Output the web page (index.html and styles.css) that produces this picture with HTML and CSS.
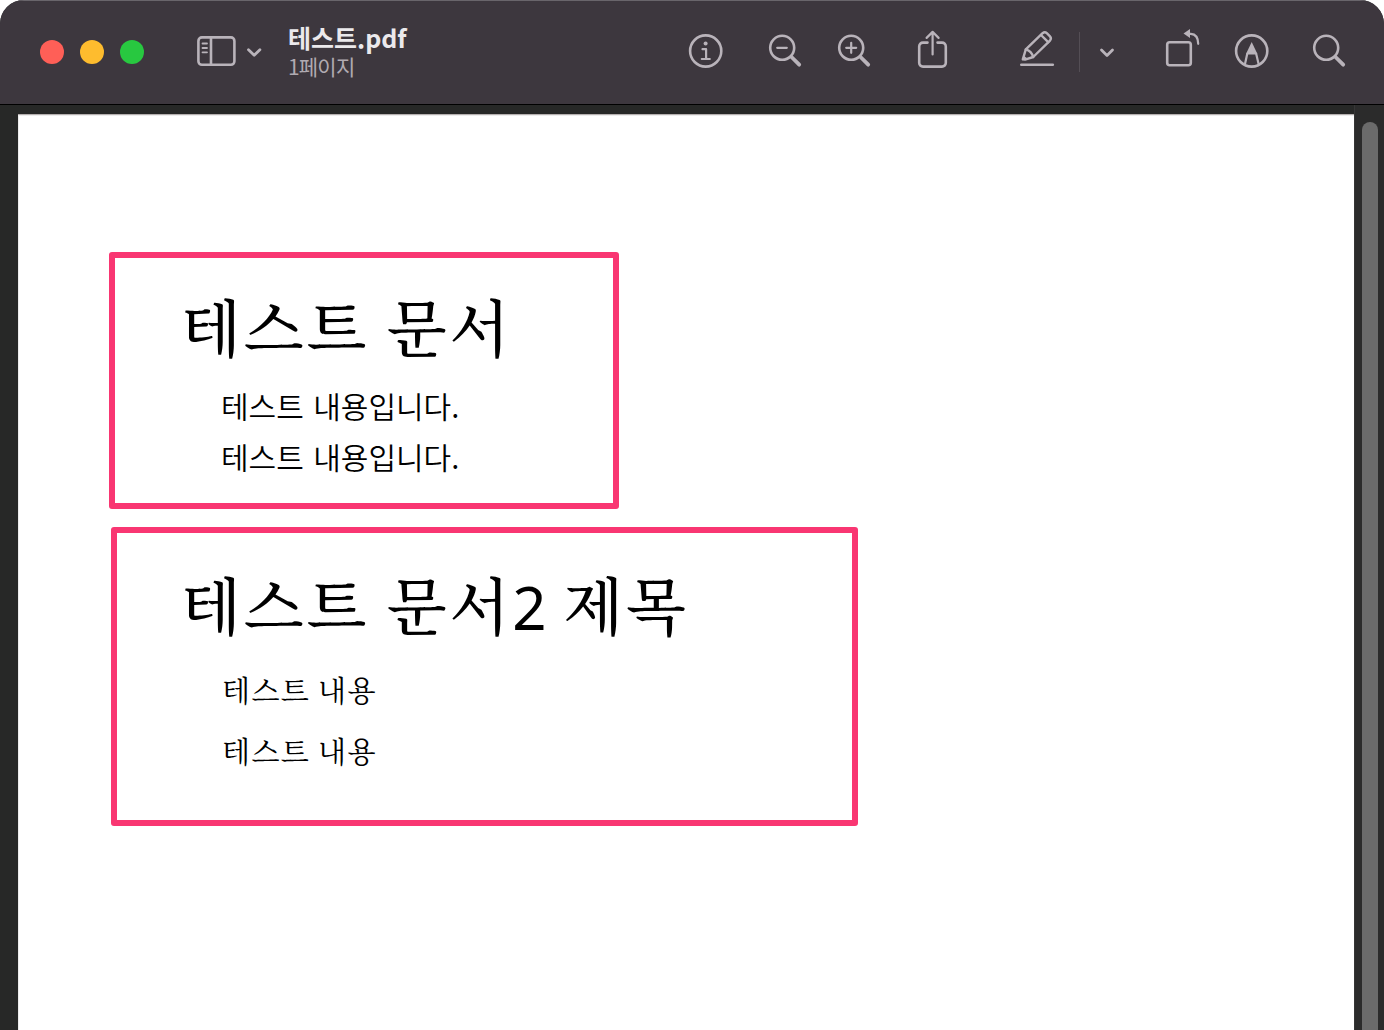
FILE: index.html
```html
<!DOCTYPE html>
<html lang="ko">
<head>
    <meta charset="UTF-8">
    <title>테스트.pdf</title>
    <link rel="stylesheet" href="styles.css">
</head>
<body>
<div class="window">
    <header class="toolbar">
        <div class="lights">
            <span class="light close"></span>
            <span class="light minimize"></span>
            <span class="light zoom"></span>
        </div>
        <svg class="icon sidebar" width="42" height="48" viewBox="0 0 42 48">
            <rect x="2.4" y="9.4" width="36" height="27.4" rx="3.5"/>
            <path d="M15 9.5v27"/>
            <path class="thin" d="M6.5 15.5h4.5M6.5 20h4.5M6.5 24.3h4.5"/>
        </svg>
        <svg class="icon chevron" width="20" height="48" viewBox="0 0 20 48">
            <path d="M4.5 21.7l5.7 5.5 5.7-5.5"/>
        </svg>
        <div class="title">
            <h1>테스트.pdf</h1>
            <span>1페이지</span>
        </div>
        <div class="tools">
            <svg class="icon" width="40" height="48" viewBox="0 0 40 48">
                <circle cx="19.7" cy="23" r="15.6"/>
                <circle class="solid" cx="19.6" cy="15.4" r="2"/>
                <path class="mid" d="M16.5 21.2h3.6v9.7M15.8 31h8"/>
            </svg>
            <svg class="icon zoom-out" width="40" height="48" viewBox="0 0 40 48">
                <circle cx="16.2" cy="19.8" r="12"/>
                <path class="mid" d="M11.2 19.8h9.6"/>
                <path class="handle" d="M25.5 29l7.7 7.7"/>
            </svg>
            <svg class="icon zoom-in" width="40" height="48" viewBox="0 0 40 48">
                <circle cx="16.2" cy="19.8" r="12"/>
                <path class="mid" d="M11.2 19.8h10M16.2 14.8v10"/>
                <path class="handle" d="M25.5 29l7.7 7.7"/>
            </svg>
            <svg class="icon share" width="40" height="48" viewBox="0 0 40 48">
                <path d="M15.5 14.6H11a3.8 3.8 0 0 0-3.8 3.8v16.4a3.8 3.8 0 0 0 3.8 3.8h19a3.8 3.8 0 0 0 3.8-3.8V18.4a3.8 3.8 0 0 0-3.8-3.8h-4.5"/>
                <path class="mid" d="M20.6 26.5v-22M14.6 9.9l6-6 6 6"/>
            </svg>
            <svg class="icon pencil" width="40" height="48" viewBox="0 0 40 48">
                <path d="M4.3 36.7h31.5"/>
                <path class="body" d="M8.8 21.4L25.6 5.2q2.2-1.8 4.2 0l3.2 3.2q1.8 2 0 4.2L16.2 29l-8.2 2.6-2.2-.2z"/>
                <path class="body" d="M24 7l7.2 7.2M8.8 21.4q5.8 1.8 7.4 7.6"/>
                <path class="solid" d="M6.6 27.5l4.5 3.5-6 1.3z"/>
            </svg>
            <span class="divider"></span>
            <svg class="icon chevron menu" width="20" height="48" viewBox="0 0 20 48">
                <path d="M4.5 21.9l5.5 5.5 5.5-5.5"/>
            </svg>
            <svg class="icon rotate" width="40" height="48" viewBox="0 0 40 48">
                <rect x="5.2" y="14.3" width="23.6" height="23" rx="2.5"/>
                <path class="mid" d="M27 5.8h1.8q7.3.4 7.4 10"/>
                <path class="solid" d="M21.5 5.5l6.5-4.6v9.2z"/>
            </svg>
            <svg class="icon markup" width="40" height="48" viewBox="0 0 40 48">
                <circle cx="19.7" cy="23" r="15.6"/>
                <path class="mid" d="M13 36l2.3-10.5h8.8L26.6 36"/>
                <path class="solid" d="M19.7 14l5.6 11.8H14.1z"/>
            </svg>
            <svg class="icon search" width="40" height="48" viewBox="0 0 40 48">
                <circle cx="16.2" cy="19.8" r="12"/>
                <path class="handle" d="M25.5 29l7.7 7.7"/>
            </svg>
        </div>
    </header>
    <div class="viewer">
        <main class="page">
            <section class="box first">
                <h2>테스트 문서</h2>
                <p>테스트 내용입니다.</p>
                <p>테스트 내용입니다.</p>
            </section>
            <section class="box second">
                <h2>테스트 문서<span class="digit">2</span> 제목</h2>
                <p>테스트 내용</p>
                <p>테스트 내용</p>
            </section>
        </main>
        <div class="scrollbar">
            <div class="thumb"></div>
        </div>
    </div>
</div>
</body>
</html>
```
FILE: styles.css
```css
* {
    box-sizing: border-box;
}
body {
    margin: 0;
    background: #fff;
    font-family: "Noto Sans CJK KR", sans-serif;
}
.window {
    display: flex;
    flex-direction: column;
    height: 1030px;
    border-radius: 24px 24px 0 0;
    overflow: hidden;
    background: #272827;
}
.toolbar {
    display: flex;
    align-items: center;
    height: 105px;
    padding: 0 34px 0 40px;
    background: #3d373e;
    border-bottom: 1px solid #000;
    box-shadow: inset 0 1px 0 #69656b;
}
.lights {
    display: flex;
    gap: 16px;
}
.light {
    width: 24px;
    height: 24px;
    border-radius: 50%;
}
.close {
    background: #ff5f57;
}
.minimize {
    background: #febc2e;
}
.zoom {
    background: #28c840;
}
.icon {
    flex: none;
    fill: none;
    stroke: #b9b3ba;
    stroke-width: 2.6;
    stroke-linecap: round;
    stroke-linejoin: round;
}
.icon .thin {
    stroke-width: 1.8;
}
.icon .mid {
    stroke-width: 2.2;
}
.icon .body {
    stroke-width: 2.4;
}
.icon .handle {
    stroke-width: 3.8;
}
.icon .solid {
    fill: #b9b3ba;
    stroke: none;
}
.sidebar {
    margin-left: 52px;
}
.chevron {
    margin-left: 6px;
    stroke-width: 2.8;
}
.title {
    margin-left: 24px;
    padding-bottom: 2px;
    color: #b0aab1;
    font-size: 21px;
    line-height: 28px;
    letter-spacing: -0.8px;
}
.title h1 {
    margin: 0;
    color: #ebe9ec;
    font-size: 25px;
    line-height: 30px;
    letter-spacing: 0;
}
.title span {
    display: block;
}
.tools {
    display: flex;
    align-items: center;
    margin-left: auto;
}
.zoom-out {
    margin-left: 40px;
}
.zoom-in {
    margin-left: 29px;
}
.share {
    margin-left: 37px;
}
.pencil {
    margin-left: 65px;
}
.divider {
    width: 1px;
    height: 40px;
    margin-left: 22px;
    background: #544e55;
}
.menu {
    margin-left: 17px;
}
.rotate {
    margin-left: 45px;
}
.markup {
    margin-left: 30px;
}
.search {
    margin-left: 38px;
}
.viewer {
    display: flex;
    flex: 1;
    padding-left: 18px;
}
.page {
    flex: 1;
    margin-top: 9px;
    padding: 137px 0 0 91px;
    background: #fff;
    border-top: 1px solid #b5b0b0;
    box-shadow: inset 1px 1px 0 #ececec;
    color: #000;
}
.box {
    border: 6px solid #f93672;
    border-radius: 3px;
}
.box h2 {
    margin: 0;
    font-family: "Noto Serif CJK KR", "Noto Sans CJK KR", serif;
    font-size: 62px;
    font-weight: 500;
    line-height: 80px;
    letter-spacing: 2.8px;
    word-spacing: -4.3px;
}
.box p {
    margin: 0;
}
.first {
    width: 510px;
    height: 257px;
    padding: 28px 0 0 66px;
}
.first p {
    padding-left: 40px;
    font-size: 30px;
    font-weight: 350;
    line-height: 51px;
    word-spacing: 1px;
}
.first h2 {
    margin-bottom: 14px;
}
.second {
    width: 747px;
    height: 299px;
    margin: 18px 0 0 2px;
    padding: 31px 0 0 64px;
}
.second h2 {
    margin-bottom: 12px;
}
.second p {
    padding-left: 41px;
    font-family: "Noto Serif CJK KR", "Noto Sans CJK KR", serif;
    font-size: 29px;
    font-weight: 400;
    line-height: 61px;
    letter-spacing: 1.4px;
    word-spacing: -2.6px;
}
.digit {
    font-family: "Noto Sans", sans-serif;
    font-size: 60px;
    font-weight: 400;
    letter-spacing: -1px;
}
.scrollbar {
    width: 30px;
    padding: 17px 6px 0 7px;
    background: #2b2b2b;
    border-left: 1px solid #363636;
}
.thumb {
    width: 16px;
    height: 100%;
    border-radius: 8px 8px 0 0;
    background: #6b6b6b;
}
```
